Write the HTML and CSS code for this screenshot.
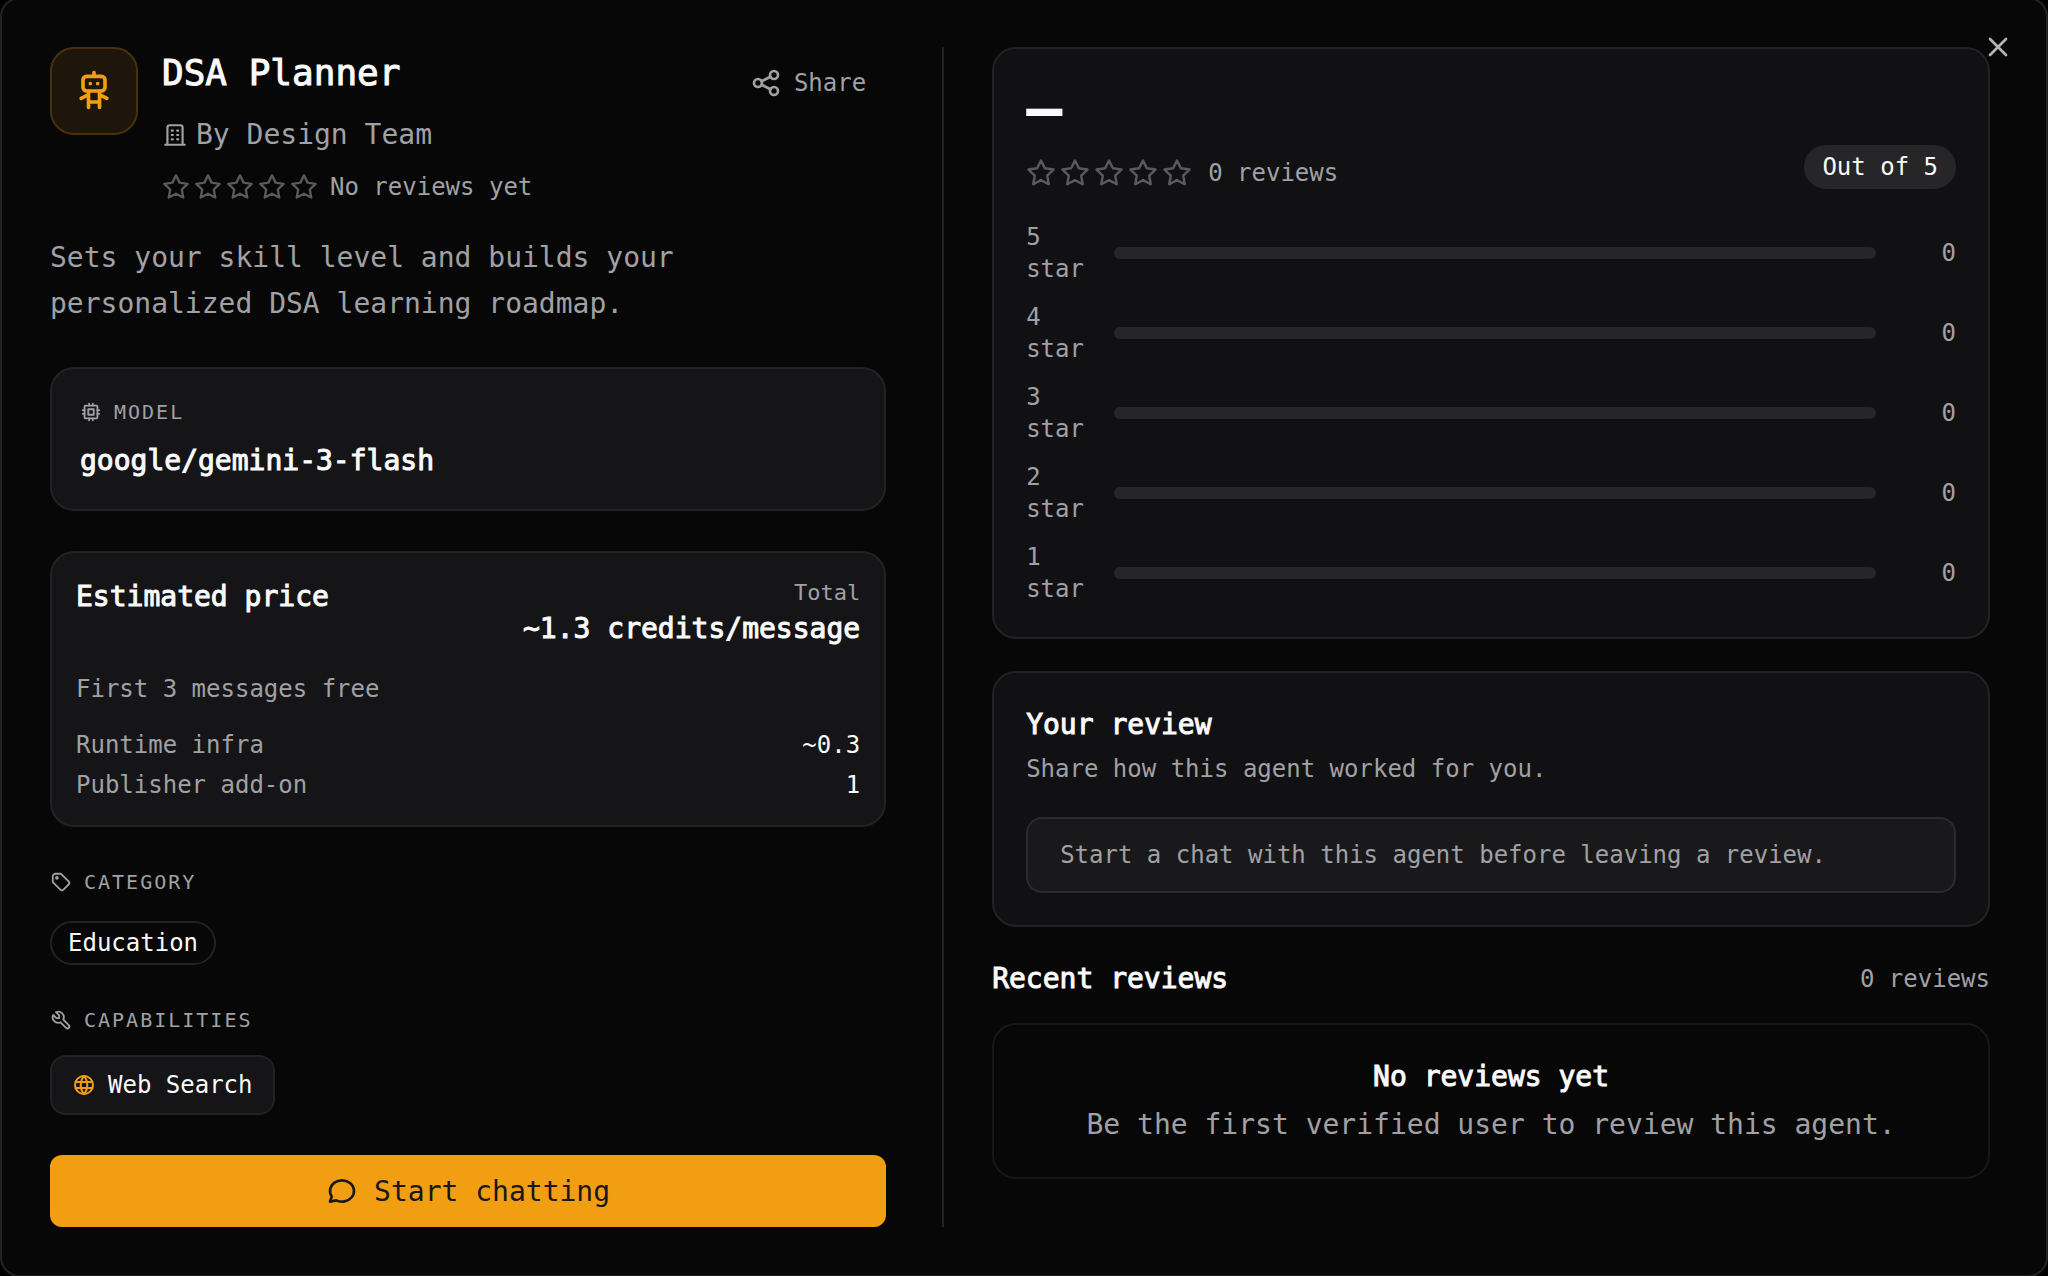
FILE: index.html
```html
<!DOCTYPE html>
<html lang="en">
<head>
    <meta charset="UTF-8">
    <meta name="viewport" content="width=device-width, initial-scale=1.0">
    <title>DSA Planner</title>
    <link rel="stylesheet" href="styles.css">
</head>
<body>

<!-- Shared icon shapes -->
<svg class="icon-defs" aria-hidden="true">
    <symbol id="star" viewBox="0 0 24 24">
        <path d="M12 17.75l-6.172 3.245l1.179 -6.873l-5 -4.867l6.9 -1l3.086 -6.253l3.086 6.253l6.9 1l-5 4.867l1.179 6.873z"/>
    </symbol>
</svg>

<main class="dialog" role="dialog" aria-labelledby="agent-name">
    <button class="close-button" type="button" aria-label="Close">
        <svg class="icon icon-lg" viewBox="0 0 24 24"><path d="M18 6l-12 12M6 6l12 12"/></svg>
    </button>

    <!-- Agent details -->
    <section class="details">
        <header class="agent-header">
            <div class="agent-avatar">
                <svg class="icon icon-xl" viewBox="0 0 24 24">
                    <path d="M8 4h8a2 2 0 0 1 2 2v4a2 2 0 0 1 -2 2h-8a2 2 0 0 1 -2 -2v-4a2 2 0 0 1 2 -2z"/>
                    <path d="M12 2v2M9 12v9M15 12v9M5 16l4 -2M15 14l4 2M9 18h6M10 8v.01M14 8v.01"/>
                </svg>
            </div>
            <div class="agent-info">
                <h1 class="agent-name" id="agent-name">DSA Planner</h1>
                <div class="agent-author">
                    <svg class="icon icon-author" viewBox="0 0 24 24">
                        <path d="M3 21h18M5 21v-16a2 2 0 0 1 2 -2h10a2 2 0 0 1 2 2v16"/>
                        <path d="M9 8h1M9 12h1M9 16h1M14 8h1M14 12h1M14 16h1"/>
                    </svg>
                    <span>By Design Team</span>
                </div>
                <div class="rating">
                    <div class="stars">
                        <svg class="star"><use href="#star"/></svg>
                        <svg class="star"><use href="#star"/></svg>
                        <svg class="star"><use href="#star"/></svg>
                        <svg class="star"><use href="#star"/></svg>
                        <svg class="star"><use href="#star"/></svg>
                    </div>
                    <span>No reviews yet</span>
                </div>
            </div>
            <button class="share-button" type="button">
                <svg class="icon icon-lg" viewBox="0 0 24 24">
                    <circle cx="6" cy="12" r="3"/>
                    <circle cx="18" cy="6" r="3"/>
                    <circle cx="18" cy="18" r="3"/>
                    <path d="M8.7 10.7l6.6 -3.4M8.7 13.3l6.6 3.4"/>
                </svg>
                Share
            </button>
        </header>

        <p class="description">Sets your skill level and builds your personalized DSA learning roadmap.</p>

        <!-- Model -->
        <div class="card model-card">
            <h2 class="label">
                <svg class="icon icon-sm" viewBox="0 0 24 24">
                    <rect x="5" y="5" width="14" height="14" rx="1"/>
                    <path d="M9 9h6v6h-6zM3 10h2M3 14h2M10 3v2M14 3v2M21 10h-2M21 14h-2M14 21v-2M10 21v-2"/>
                </svg>
                MODEL
            </h2>
            <div class="model-name">google/gemini-3-flash</div>
        </div>

        <!-- Price -->
        <div class="card price-card">
            <div class="price-head">
                <h2 class="heading">Estimated price</h2>
                <div class="price-total">
                    <div class="price-caption">Total</div>
                    <div class="heading">~1.3 credits/message</div>
                </div>
            </div>
            <p class="note">First 3 messages free</p>
            <dl class="price-list">
                <div class="price-row"><dt>Runtime infra</dt><dd>~0.3</dd></div>
                <div class="price-row"><dt>Publisher add-on</dt><dd>1</dd></div>
            </dl>
        </div>

        <!-- Category -->
        <div class="category">
            <h2 class="label">
                <svg class="icon icon-sm" viewBox="0 0 24 24">
                    <circle cx="7.5" cy="7.5" r="1"/>
                    <path d="M3 6v5.172a2 2 0 0 0 .586 1.414l7.71 7.71a2.41 2.41 0 0 0 3.408 0l5.592 -5.592a2.41 2.41 0 0 0 0 -3.408l-7.71 -7.71a2 2 0 0 0 -1.414 -.586h-5.172a3 3 0 0 0 -3 3z"/>
                </svg>
                CATEGORY
            </h2>
            <span class="pill">Education</span>
        </div>

        <!-- Capabilities -->
        <div class="capabilities">
            <h2 class="label">
                <svg class="icon icon-sm" viewBox="0 0 24 24">
                    <path d="M7 10h3v-3l-3.5 -3.5a6 6 0 0 1 8 8l6 6a2 2 0 0 1 -3 3l-6 -6a6 6 0 0 1 -8 -8l3.5 3.5"/>
                </svg>
                CAPABILITIES
            </h2>
            <span class="chip">
                <svg class="icon icon-md" viewBox="0 0 24 24">
                    <circle cx="12" cy="12" r="9"/>
                    <path d="M3.6 9h16.8M3.6 15h16.8M11.5 3a17 17 0 0 0 0 18M12.5 3a17 17 0 0 1 0 18"/>
                </svg>
                Web Search
            </span>
        </div>

        <button class="chat-button" type="button">
            <svg class="icon icon-lg" viewBox="0 0 24 24">
                <path d="M3 20l1.3 -3.9c-2.324 -3.437 -1.426 -7.872 2.1 -10.374c3.526 -2.501 8.59 -2.296 11.845 .48c3.255 2.777 3.695 7.266 1.029 10.501c-2.666 3.235 -7.615 4.215 -11.574 2.293l-4.7 1"/>
            </svg>
            Start chatting
        </button>
    </section>

    <!-- Reviews -->
    <section class="reviews">
        <div class="card review-card">
            <div class="score-head">
                <div>
                    <div class="score">—</div>
                    <div class="rating rating-lg">
                        <div class="stars">
                            <svg class="star"><use href="#star"/></svg>
                            <svg class="star"><use href="#star"/></svg>
                            <svg class="star"><use href="#star"/></svg>
                            <svg class="star"><use href="#star"/></svg>
                            <svg class="star"><use href="#star"/></svg>
                        </div>
                        <span>0 reviews</span>
                    </div>
                </div>
                <span class="pill pill-filled">Out of 5</span>
            </div>
            <div class="bars">
                <div class="bar-row"><span>5 star</span><div class="bar"></div><span class="count">0</span></div>
                <div class="bar-row"><span>4 star</span><div class="bar"></div><span class="count">0</span></div>
                <div class="bar-row"><span>3 star</span><div class="bar"></div><span class="count">0</span></div>
                <div class="bar-row"><span>2 star</span><div class="bar"></div><span class="count">0</span></div>
                <div class="bar-row"><span>1 star</span><div class="bar"></div><span class="count">0</span></div>
            </div>
        </div>

        <div class="card review-card">
            <h2 class="heading">Your review</h2>
            <p class="hint">Share how this agent worked for you.</p>
            <div class="notice">Start a chat with this agent before leaving a review.</div>
        </div>

        <div class="recent">
            <div class="recent-head">
                <h2 class="heading">Recent reviews</h2>
                <span>0 reviews</span>
            </div>
            <div class="empty">
                <p class="heading">No reviews yet</p>
                <p class="empty-text">Be the first verified user to review this agent.</p>
            </div>
        </div>
    </section>
</main>

</body>
</html>
```
FILE: styles.css
```css
* {
    box-sizing: border-box;
}
body {
    margin: 0;
    background-color: #000;
    color: #a1a1a5;
    font-family: "DejaVu Sans Mono", monospace;
    font-size: 24px;
    line-height: 32px;
    overflow: hidden;
}
h1, h2, p, dl, dd {
    margin: 0;
    font-weight: normal;
}
button {
    font-family: inherit;
    border: none;
    cursor: pointer;
}
.dialog {
    position: relative;
    display: grid;
    grid-template-columns: 28fr 33fr;
    min-height: calc(100vh + 4px);
    margin-top: -3px;
    padding: 48px;
    background-color: #070707;
    border: 2px solid #222224;
    border-radius: 20px;
}

/* Icons */
.icon-defs {
    position: absolute;
    width: 0;
    height: 0;
}
.icon,
.star {
    flex: none;
    fill: none;
    stroke: currentColor;
    stroke-width: 2;
    stroke-linecap: round;
    stroke-linejoin: round;
}
.icon-sm {
    width: 22px;
    height: 22px;
}
.icon-author {
    width: 26px;
    height: 26px;
}
.icon-md {
    width: 24px;
    height: 24px;
}
.icon-lg {
    width: 32px;
    height: 32px;
}
.icon-xl {
    width: 44px;
    height: 44px;
}
.close-button {
    position: absolute;
    top: 32px;
    right: 32px;
    display: flex;
    padding: 0;
    background: none;
    color: #b4b4b6;
}

/* Left column */
.details {
    display: flex;
    flex-direction: column;
    gap: 40px;
    padding-right: 56px;
    border-right: 2px solid #222224;
}
.agent-header {
    display: flex;
    align-items: flex-start;
    gap: 24px;
}
.agent-avatar {
    display: flex;
    align-items: center;
    justify-content: center;
    width: 88px;
    height: 88px;
    background-color: #1e160a;
    border: 2px solid #4a310c;
    border-radius: 24px;
    color: #f19e12;
}
.agent-info {
    display: flex;
    flex-direction: column;
    flex: 1;
    gap: 16px;
}
.agent-name {
    color: #fafafa;
    font-size: 36px;
    line-height: 52px;
    -webkit-text-stroke: 1px;
}
.agent-author {
    display: flex;
    align-items: center;
    gap: 8px;
    font-size: 28px;
    line-height: 40px;
}
.rating {
    display: flex;
    align-items: center;
    gap: 12px;
}
.stars {
    display: flex;
    gap: 4px;
    color: #5a5a5d;
}
.star {
    width: 28px;
    height: 28px;
}
.rating-lg {
    gap: 16px;
}
.rating-lg .star {
    width: 30px;
    height: 30px;
}
.share-button {
    display: flex;
    align-items: center;
    gap: 12px;
    height: 72px;
    padding: 0 20px;
    background: none;
    color: #a1a1a5;
    font-size: 24px;
}
.description {
    max-width: 672px;
    margin-top: -8px;
    font-size: 28px;
    line-height: 46px;
}
.card {
    background-color: #151517;
    border: 2px solid #222224;
    border-radius: 24px;
}
.label {
    display: flex;
    align-items: center;
    gap: 12px;
    font-size: 20px;
    line-height: 30px;
    letter-spacing: 2px;
}
.heading,
.model-name {
    color: #fafafa;
    font-size: 28px;
    line-height: 40px;
    -webkit-text-stroke: 1px;
}
.model-card {
    display: flex;
    flex-direction: column;
    gap: 14px;
    padding: 28px;
}
.price-card {
    display: flex;
    flex-direction: column;
    gap: 24px;
    padding: 24px;
}
.price-head {
    display: flex;
    justify-content: space-between;
    align-items: flex-start;
}
.price-total {
    text-align: right;
}
.price-caption {
    font-size: 22px;
}
.price-list {
    display: flex;
    flex-direction: column;
    gap: 8px;
}
.price-row {
    display: flex;
    justify-content: space-between;
}
.price-row dd {
    color: #fafafa;
}
.category,
.capabilities {
    display: flex;
    flex-direction: column;
    align-items: flex-start;
    gap: 24px;
}
.capabilities {
    gap: 20px;
}
.pill {
    padding: 4px 16px;
    border: 2px solid #222224;
    border-radius: 22px;
    color: #fafafa;
}
.pill-filled {
    background-color: #262628;
    border-color: #262628;
}
.chip {
    display: flex;
    align-items: center;
    gap: 12px;
    padding: 12px 20px;
    background-color: #151517;
    border: 2px solid #222224;
    border-radius: 16px;
    color: #fafafa;
}
.chip .icon {
    color: #f19e12;
}
.chat-button {
    display: flex;
    align-items: center;
    justify-content: center;
    gap: 16px;
    height: 72px;
    background-color: #f19e12;
    border-radius: 12px;
    color: #18181b;
    font-size: 28px;
}

/* Right column */
.reviews {
    display: flex;
    flex-direction: column;
    gap: 32px;
    padding-left: 48px;
    padding-right: 8px;
}
.review-card {
    padding: 32px;
    background-color: #111113;
}
.score-head {
    display: flex;
    justify-content: space-between;
    align-items: flex-end;
}
.score {
    margin-bottom: 22px;
    color: #fafafa;
    font-size: 60px;
    font-weight: bold;
    line-height: 54px;
}
.bars {
    display: flex;
    flex-direction: column;
    gap: 16px;
    margin-top: 32px;
}
.bar-row {
    display: grid;
    grid-template-columns: 64px 1fr 56px;
    align-items: center;
    gap: 24px;
}
.bar {
    height: 12px;
    background-color: #262628;
    border-radius: 6px;
}
.count {
    text-align: right;
}
.hint {
    margin-top: 8px;
}
.notice {
    margin-top: 32px;
    padding: 20px 32px;
    background-color: #19191b;
    border: 2px solid #2b2b2e;
    border-radius: 16px;
}
.recent {
    display: flex;
    flex-direction: column;
    gap: 24px;
}
.recent-head {
    display: flex;
    justify-content: space-between;
    align-items: center;
}
.empty {
    display: flex;
    flex-direction: column;
    gap: 8px;
    padding: 32px;
    border: 2px solid #171718;
    border-radius: 24px;
    text-align: center;
}
.empty-text {
    font-size: 28px;
    line-height: 40px;
}
```
